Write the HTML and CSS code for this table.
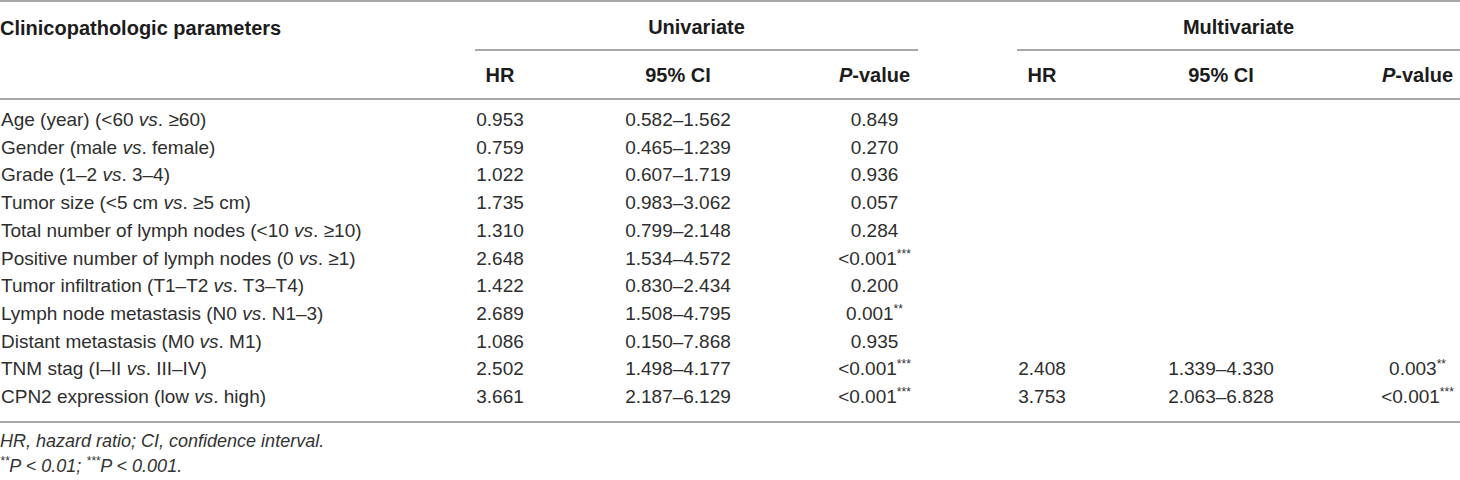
FILE: index.html
```html
<!DOCTYPE html>
<html>
<head>
<meta charset="utf-8">
<title>Cox regression</title>
<link rel="stylesheet" href="styles.css">
</head>
<body>

<table class="cox">
  <colgroup>
    <col class="c-param">
    <col class="c-hr">
    <col class="c-ci">
    <col class="c-p">
    <col class="c-gap">
    <col class="c-hr">
    <col class="c-ci2">
    <col class="c-p2">
  </colgroup>
  <thead>
    <tr class="group-row">
      <th class="param" rowspan="2">Clinicopathologic parameters</th>
      <th class="group" colspan="3">Univariate</th>
      <th class="gap"></th>
      <th class="group" colspan="3">Multivariate</th>
    </tr>
    <tr class="sub-row">
      <th>HR</th>
      <th>95% CI</th>
      <th><i>P</i>-value</th>
      <th class="gap"></th>
      <th>HR</th>
      <th>95% CI</th>
      <th><i>P</i>-value</th>
    </tr>
  </thead>
  <tbody>
    <tr><td class="param">Age (year) (&lt;60 <i>vs</i>. &ge;60)</td><td>0.953</td><td>0.582&ndash;1.562</td><td>0.849</td><td></td><td></td><td></td><td></td></tr>
    <tr><td class="param">Gender (male <i>vs</i>. female)</td><td>0.759</td><td>0.465&ndash;1.239</td><td>0.270</td><td></td><td></td><td></td><td></td></tr>
    <tr><td class="param">Grade (1&ndash;2 <i>vs</i>. 3&ndash;4)</td><td>1.022</td><td>0.607&ndash;1.719</td><td>0.936</td><td></td><td></td><td></td><td></td></tr>
    <tr><td class="param">Tumor size (&lt;5 cm <i>vs</i>. &ge;5 cm)</td><td>1.735</td><td>0.983&ndash;3.062</td><td>0.057</td><td></td><td></td><td></td><td></td></tr>
    <tr><td class="param">Total number of lymph nodes (&lt;10 <i>vs</i>. &ge;10)</td><td>1.310</td><td>0.799&ndash;2.148</td><td>0.284</td><td></td><td></td><td></td><td></td></tr>
    <tr><td class="param">Positive number of lymph nodes (0 <i>vs</i>. &ge;1)</td><td>2.648</td><td>1.534&ndash;4.572</td><td>&lt;0.001<sup>***</sup></td><td></td><td></td><td></td><td></td></tr>
    <tr><td class="param">Tumor infiltration (T1&ndash;T2 <i>vs</i>. T3&ndash;T4)</td><td>1.422</td><td>0.830&ndash;2.434</td><td>0.200</td><td></td><td></td><td></td><td></td></tr>
    <tr><td class="param">Lymph node metastasis (N0 <i>vs</i>. N1&ndash;3)</td><td>2.689</td><td>1.508&ndash;4.795</td><td>0.001<sup>**</sup></td><td></td><td></td><td></td><td></td></tr>
    <tr><td class="param">Distant metastasis (M0 <i>vs</i>. M1)</td><td>1.086</td><td>0.150&ndash;7.868</td><td>0.935</td><td></td><td></td><td></td><td></td></tr>
    <tr><td class="param">TNM stag (I&ndash;II <i>vs</i>. III&ndash;IV)</td><td>2.502</td><td>1.498&ndash;4.177</td><td>&lt;0.001<sup>***</sup></td><td></td><td>2.408</td><td>1.339&ndash;4.330</td><td>0.003<sup>**</sup></td></tr>
    <tr><td class="param">CPN2 expression (low <i>vs</i>. high)</td><td>3.661</td><td>2.187&ndash;6.129</td><td>&lt;0.001<sup>***</sup></td><td></td><td>3.753</td><td>2.063&ndash;6.828</td><td>&lt;0.001<sup>***</sup></td></tr>
  </tbody>
</table>

<div class="notes">
  <p>HR, hazard ratio; CI, confidence interval.</p>
  <p><sup>**</sup>P &lt; 0.01; <sup>***</sup>P &lt; 0.001.</p>
</div>

</body>
</html>
```

FILE: styles.css
```css
* {box-sizing: border-box;}
body {
    margin: 0;
    background: #fff;
    font-family: "Liberation Sans", Arial, sans-serif;
    color: #2e2e2e;
}

/* main table */
.cox {
    width: 1460px;
    border-collapse: collapse;
    table-layout: fixed;
    font-size: 19px;
}

.c-param {width: 475px;}
.c-hr {width: 50px;}
.c-ci {width: 306px;}
.c-p {width: 87px;}
.c-gap {width: 99px;}
.c-ci2 {width: 308px;}
.c-p2 {width: 85px;}

.cox thead {
    border-top: 2px solid #a8a8a8;
    border-bottom: 2px solid #a8a8a8;
}

.cox th {
    font-size: 20px;
    font-weight: bold;
    color: #1c1c1c;
    text-align: center;
    padding: 0;
    white-space: nowrap;
}

.group-row th {
    height: 49px;
    padding-top: 4px;
}

.cox th.param {
    text-align: left;
    vertical-align: top;
    padding-top: 15px;
}

.cox th.group {
    border-bottom: 2px solid #a8a8a8;
}

.sub-row th {
    height: 49px;
    padding-top: 2px;
}

.cox td {
    padding: 0;
    line-height: 27.7px;
    text-align: center;
    white-space: nowrap;
}

.cox td.param {
    text-align: left;
    padding-left: 1px;
}

.cox tbody tr:first-child td {padding-top: 6px;}
.cox tbody tr:last-child td {padding-bottom: 10px;}

.cox tbody {
    border-bottom: 2px solid #a8a8a8;
}

sup {
    font-size: 12px;
    line-height: 0;
    vertical-align: 7px;
}

/* footnotes */
.notes {
    font-size: 18px;
    font-style: italic;
    color: #333;
    padding-top: 6px;
}

.notes p {
    margin: 0;
    line-height: 25px;
}
```
